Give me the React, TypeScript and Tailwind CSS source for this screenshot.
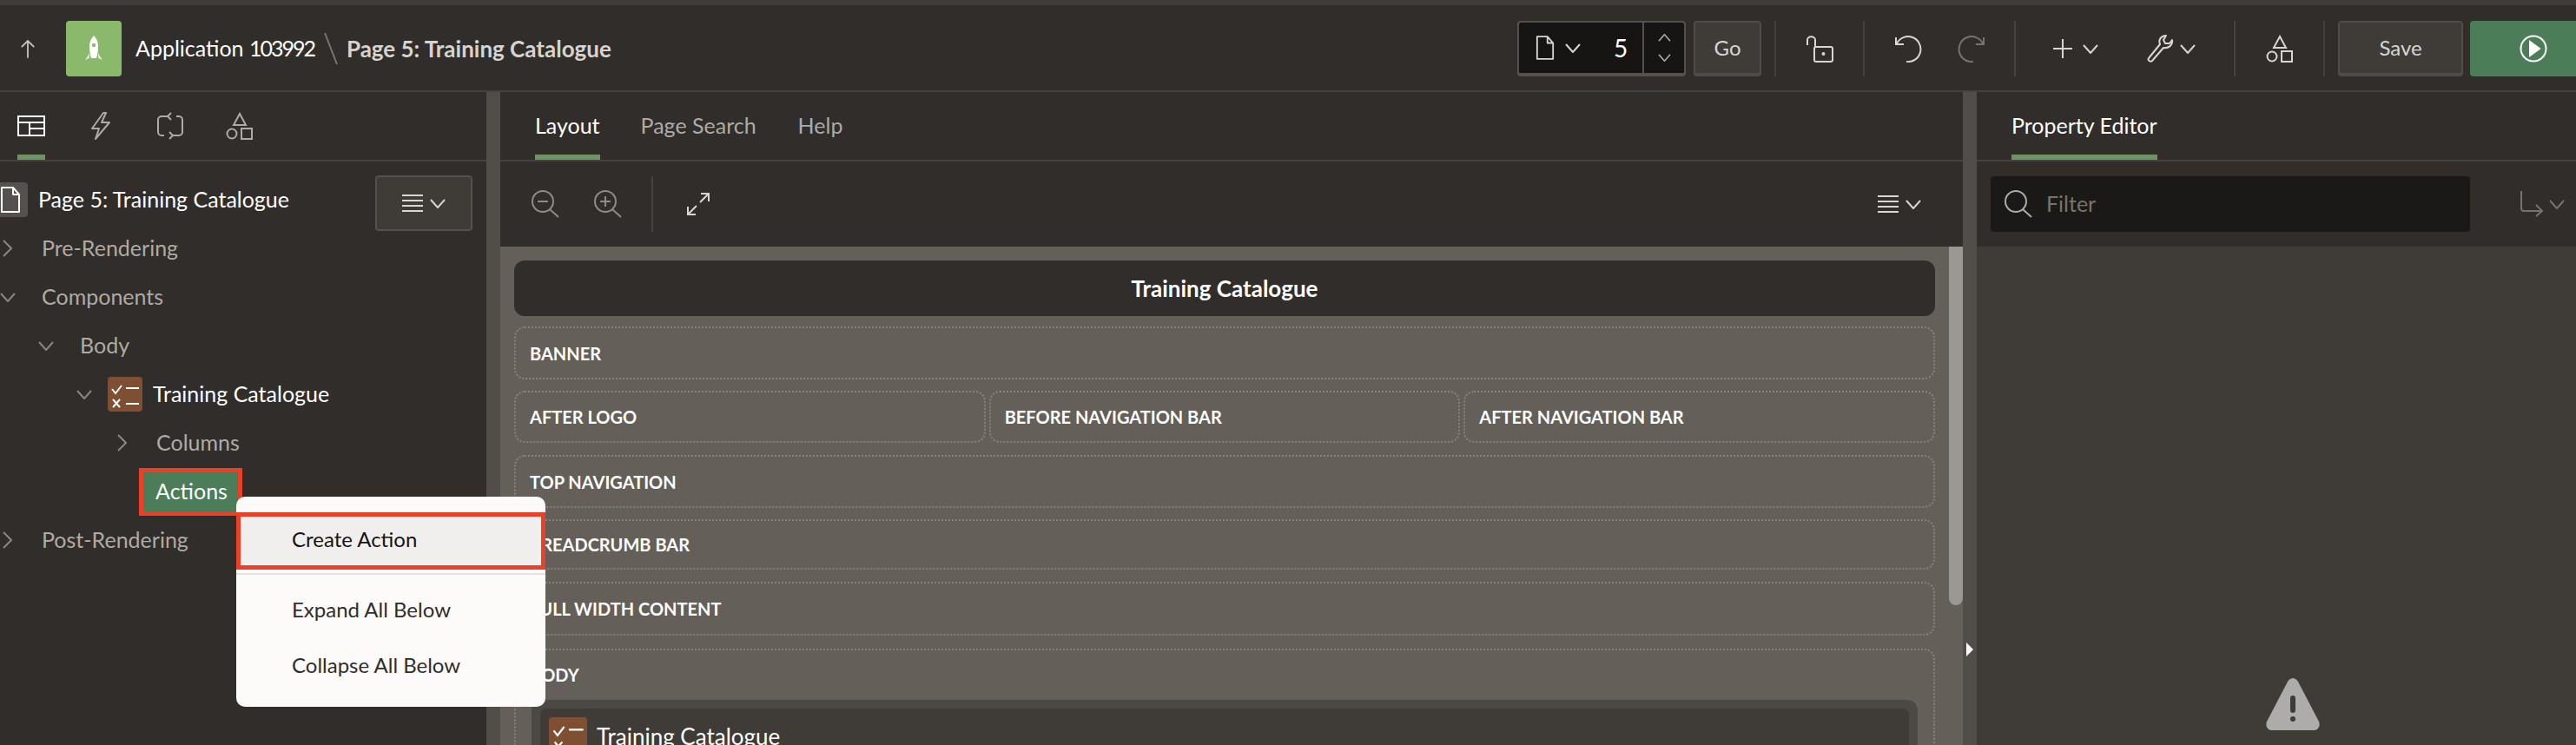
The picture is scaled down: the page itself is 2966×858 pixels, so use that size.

const stroke = { fill: "none", stroke: "currentColor", strokeWidth: 2 };

function Chev({ dir = "down", className = "" }: { dir?: "down" | "up" | "right"; className?: string }) {
  const d = dir === "down" ? "M1 1l8 9 8-9" : dir === "up" ? "M1 10l8-9 8 9" : "M1 1l9 9-9 9";
  const vb = dir === "right" ? "0 0 11 20" : "0 0 18 11";
  return (
    <svg viewBox={vb} className={className} {...stroke}>
      <path d={d} />
    </svg>
  );
}

function PageIcon({ className = "" }: { className?: string }) {
  return (
    <svg viewBox="0 0 24 32" className={className} {...stroke}>
      <path d="M2 2h13l7 8v20H2zM15 2v8h7" strokeLinejoin="round" />
    </svg>
  );
}

function Shapes({ className = "" }: { className?: string }) {
  return (
    <svg viewBox="0 0 32 32" className={className} {...stroke}>
      <path d="M16 2l7 13H9z" />
      <circle cx="7" cy="25" r="5.5" />
      <rect x="18" y="19" width="12" height="12" />
    </svg>
  );
}

function ListTile({ className = "" }: { className?: string }) {
  return (
    <div className={`flex items-center justify-center rounded-[4px] bg-[#7f4f33] ${className}`}>
      <svg viewBox="0 0 40 40" className="w-full h-full" fill="none" stroke="white" strokeWidth="2">
        <path d="M5 14l4 5 7-9M21 13h15M6 26l8 9M14 26l-8 9M21 31h15" />
      </svg>
    </div>
  );
}

function MenuGlyph({ className = "" }: { className?: string }) {
  return (
    <div className={`flex items-center gap-[8px] text-[#d8d6d3] ${className}`}>
      <svg viewBox="0 0 24 20" className="w-[24px] h-[20px]" {...stroke}>
        <path d="M0 1h24M0 7h24M0 13h24M0 19h24" />
      </svg>
      <Chev className="w-[18px] h-[11px]" />
    </div>
  );
}

function Sep({ className = "" }: { className?: string }) {
  return <div className={`w-[2px] h-[64px] shrink-0 bg-[#45413d] ${className}`} />;
}

function Region({ label, className = "" }: { label: string; className?: string }) {
  return (
    <div className={`flex items-center pl-[16px] rounded-[12px] border-2 border-dotted border-[#86827c] text-[20px] font-bold text-white ${className}`}>
      {label}
    </div>
  );
}

function TreeRow({ label, indent, open }: { label: string; indent: number; open?: boolean }) {
  return (
    <div className="h-[56px] flex items-center text-[#aeaba6]" style={{ paddingLeft: indent }}>
      <span className="w-[48px] shrink-0 flex items-center">
        {open ? <Chev className="w-[18px] h-[11px] text-[#8a8681]" /> : <Chev dir="right" className="w-[11px] h-[20px] ml-[3px] text-[#8a8681]" />}
      </span>
      <span>{label}</span>
    </div>
  );
}

function Tab({ label, active, className = "" }: { label: string; active?: boolean; className?: string }) {
  return (
    <div className={`h-[78px] flex flex-col ${className}`}>
      <div className={`flex-1 flex items-center text-[25px] pt-[6px] ${active ? "text-white" : "text-[#aeaba6]"}`}>{label}</div>
      <div className={`h-[6px] ${active ? "bg-[#6f9464]" : ""}`} />
    </div>
  );
}

export default function App() {
  return (
    <div className="relative w-[2966px] h-[858px] overflow-hidden flex flex-col bg-[#312d2a] text-[25px] text-white font-['Lato','Noto_Sans',sans-serif]">
      <div className="h-[6px] shrink-0 bg-[#403d38]" />

      {/* header */}
      <div className="h-[100px] shrink-0 flex items-start pt-[18px] border-b-2 border-[#45413d]">
        <svg viewBox="0 0 20 24" className="w-[18px] h-[22px] ml-[23px] mt-[21px] text-[#c9c6c2]" {...stroke}>
          <path d="M10 24V2M2 10l8-8 8 8" />
        </svg>
        <div className="w-[64px] h-[64px] ml-[35px] rounded-[4px] bg-[#8bb96c] flex items-center justify-center">
          <svg viewBox="0 0 24 32" className="w-[24px] h-[32px]">
            <path d="M2 29l5-8v6zM22 29l-5-8v6z" fill="#d9e8cc" />
            <path d="M12 1c4 4 5 9 5 13 0 5-1 9-2 13H9c-1-4-2-8-2-13 0-4 1-9 5-13z" fill="#fff" />
            <circle cx="12" cy="12" r="2.2" fill="#8bb96c" />
          </svg>
        </div>
        <div className="ml-[16px] h-[64px] flex items-center whitespace-pre">
          Application <span className="tracking-[-2px]">103992</span>
        </div>
        <svg viewBox="0 0 16 36" className="w-[16px] h-[36px] ml-[11px] mt-[14px] text-[#77736e]" {...stroke}>
          <path d="M1 0l14 36" />
        </svg>
        <div className="ml-[10px] h-[64px] flex items-center font-bold text-[26px] text-[#d6d4d0]">Page 5: Training Catalogue</div>

        <div className="ml-auto flex items-start text-[#d8d6d3]">
          <div className="w-[194px] h-[64px] flex rounded-[4px] bg-[#161513] border-2 border-b-4 border-[#55514d]">
            <div className="flex-1 flex items-center pl-[19px]">
              <PageIcon className="w-[22px] h-[32px]" />
              <Chev className="w-[18px] h-[11px] ml-[12px]" />
              <span className="ml-[38px] text-white text-[28px]">5</span>
            </div>
            <div className="w-[48px] border-l-2 border-[#55514d] flex flex-col items-center justify-between py-[13px] text-[#aeaba6]">
              <Chev dir="up" className="w-[15px] h-[9px]" />
              <Chev className="w-[15px] h-[9px]" />
            </div>
          </div>
          <div className="ml-[9px] w-[78px] h-[64px] rounded-[4px] bg-[#3f3c38] border-2 border-b-4 border-[#4f4b47] flex items-center justify-center text-[24px]">Go</div>
          <Sep className="ml-[15px]" />
          <svg viewBox="0 0 32 32" className="w-[32px] h-[32px] ml-[34px] mt-[16px]" {...stroke}>
            <path d="M2 12V6c0-5 9-5 9 0v8" />
            <rect x="10" y="14" width="21" height="17" rx="2" />
            <circle cx="20.5" cy="22" r="1" fill="currentColor" />
          </svg>
          <Sep className="ml-[34px]" />
          <svg viewBox="0 0 32 32" className="w-[32px] h-[32px] ml-[35px] mt-[16px]" {...stroke}>
            <path d="M1 3v8h9M2 10A14.5 14.5 0 1 1 13 31" />
          </svg>
          <svg viewBox="0 0 32 32" className="w-[32px] h-[32px] ml-[39px] mt-[16px] text-[#77736e]" {...stroke}>
            <path d="M31 3v8h-9M30 10A14.5 14.5 0 1 0 19 31" />
          </svg>
          <Sep className="ml-[34px]" />
          <svg viewBox="0 0 22 22" className="w-[22px] h-[22px] ml-[43px] mt-[21px]" {...stroke}>
            <path d="M11 0v22M0 11h22" />
          </svg>
          <Chev className="w-[18px] h-[11px] ml-[12px] mt-[27px]" />
          <svg viewBox="0 0 32 32" className="w-[32px] h-[32px] ml-[55px] mt-[16px]" {...stroke}>
            <path d="M3 27L16 11c-2-5 1-10 7-10l-3 5 2 4 5 0 3-4c1 6-4 10-10 9L7 30c-2 2-6-1-4-3z" strokeLinejoin="round" />
          </svg>
          <Chev className="w-[18px] h-[11px] ml-[7px] mt-[27px]" />
          <Sep className="ml-[44px]" />
          <Shapes className="w-[32px] h-[32px] ml-[35px] mt-[16px]" />
          <Sep className="ml-[34px]" />
          <div className="ml-[15px] w-[144px] h-[64px] rounded-[4px] bg-[#3f3c38] border-2 border-b-4 border-[#4f4b47] flex items-center justify-center text-[24px]">Save</div>
          <div className="ml-[8px] w-[122px] h-[64px] rounded-l-[4px] bg-[#4a7d58] flex items-center pl-[57px]">
            <svg viewBox="0 0 32 32" className="w-[32px] h-[32px] text-white" {...stroke}>
              <circle cx="16" cy="16" r="14.5" />
              <path d="M12 8l11 8-11 8z" fill="currentColor" />
            </svg>
          </div>
        </div>
      </div>

      <div className="flex-1 min-h-0 flex">
        {/* left tree */}
        <div className="w-[560px] shrink-0 flex flex-col">
          <div className="h-[80px] shrink-0 flex items-start pl-[20px] border-b-2 border-[#45413d]">
            <div className="flex flex-col w-[32px] h-[78px]">
              <div className="flex-1 flex items-center pt-[6px]">
                <svg viewBox="0 0 32 24" className="w-[32px] h-[24px]" {...stroke}>
                  <rect x="1" y="1" width="30" height="22" />
                  <path d="M1 8h30M14 8v15M14 15h17" />
                </svg>
              </div>
              <div className="h-[6px] bg-[#6f9464]" />
            </div>
            <div className="flex items-center h-[78px] text-[#aeaba6]">
              <svg viewBox="0 0 24 32" className="w-[24px] h-[32px] ml-[52px]" {...stroke}>
                <path d="M15 1L2 19h8l-4 12 16-19h-9l5-11z" strokeLinejoin="round" />
              </svg>
              <svg viewBox="0 0 32 32" className="w-[32px] h-[32px] ml-[52px]" {...stroke}>
                <path d="M13 5H6a4 4 0 0 0-4 4v14a4 4 0 0 0 4 4h3M19 27h7a4 4 0 0 0 4-4V9a4 4 0 0 0-4-4h-3M17 1l-4 4 4 4M15 23l4 4-4 4" />
              </svg>
              <Shapes className="w-[32px] h-[32px] ml-[48px]" />
            </div>
          </div>

          <div className="h-[72px] shrink-0 flex items-start">
            <div className="w-[32px] h-[40px] mt-[24px] rounded-r-[4px] bg-[#55514d] flex items-center text-white">
              <PageIcon className="w-[24px] h-[32px]" />
            </div>
            <span className="ml-[12px] mt-[24px] h-[40px] flex items-center">Page 5: Training Catalogue</span>
            <div className="ml-auto mr-[16px] mt-[16px] w-[112px] h-[64px] rounded-[4px] bg-[#3f3c38] border-2 border-[#55514d] flex items-center justify-center">
              <MenuGlyph />
            </div>
          </div>

          <TreeRow label="Pre-Rendering" indent={0} />
          <TreeRow label="Components" indent={0} open />
          <TreeRow label="Body" indent={44} open />
          <div className="h-[56px] flex items-center pl-[88px]">
            <Chev className="w-[18px] h-[11px] text-[#8a8681]" />
            <ListTile className="w-[40px] h-[40px] ml-[18px]" />
            <span className="ml-[12px]">Training Catalogue</span>
          </div>
          <TreeRow label="Columns" indent={132} />
          <div className="h-[56px] flex items-center pl-[160px]">
            <div className="w-[119px] h-[55px] border-[5px] border-[#ec3f25] flex items-center">
              <div className="w-full h-full bg-[#4a7d58] flex items-center justify-center pl-[2px] text-white">Actions</div>
            </div>
          </div>
          <TreeRow label="Post-Rendering" indent={0} />
        </div>

        <div className="w-[16px] shrink-0 bg-[#514d49]" />

        {/* layout */}
        <div className="flex-1 min-w-0 flex flex-col">
          <div className="h-[80px] shrink-0 flex pl-[40px] border-b-2 border-[#45413d]">
            <Tab label="Layout" active />
            <Tab label="Page Search" className="ml-[47px]" />
            <Tab label="Help" className="ml-[48px]" />
          </div>
          <div className="h-[98px] shrink-0 flex items-center pl-[36px] pr-[48px] text-[#8f8b86]">
            <svg viewBox="0 0 32 32" className="w-[32px] h-[32px]" {...stroke}>
              <circle cx="13" cy="13" r="12" />
              <path d="M21 22l10 9M7 13h12" />
            </svg>
            <svg viewBox="0 0 32 32" className="w-[32px] h-[32px] ml-[40px]" {...stroke}>
              <circle cx="13" cy="13" r="12" />
              <path d="M21 22l10 9M7 13h12M13 7v12" />
            </svg>
            <Sep className="ml-[34px]" />
            <svg viewBox="0 0 28 28" className="w-[28px] h-[28px] ml-[38px] text-[#d8d6d3]" {...stroke}>
              <path d="M16 12L26 2M17 2h9v9M12 16L2 26M2 17v9h9" />
            </svg>
            <MenuGlyph className="ml-auto" />
          </div>

          <div className="flex-1 min-h-0 flex bg-[#645f59] overflow-hidden">
            <div className="flex-1 min-w-0 flex flex-col pl-[16px] pr-[16px] pt-[16px]">
              <div className="h-[64px] shrink-0 rounded-[12px] bg-[#312d2a] flex items-center justify-center font-bold text-[26px]">Training Catalogue</div>
              <Region label="BANNER" className="h-[61px] mt-[12px] shrink-0" />
              <div className="h-[60px] mt-[13px] shrink-0 flex gap-[4px]">
                <Region label="AFTER LOGO" className="flex-1" />
                <Region label="BEFORE NAVIGATION BAR" className="flex-1" />
                <Region label="AFTER NAVIGATION BAR" className="flex-1" />
              </div>
              <Region label="TOP NAVIGATION" className="h-[61px] mt-[14px] shrink-0" />
              <Region label="BREADCRUMB BAR" className="h-[58px] mt-[13px] shrink-0" />
              <Region label="FULL WIDTH CONTENT" className="h-[62px] mt-[14px] shrink-0" />
              <div className="mt-[15px] shrink-0 h-[300px] rounded-[12px] border-2 border-dotted border-[#86827c]">
                <div className="h-[57px] flex items-center pl-[16px] pb-[2px] text-[20px] font-bold">BODY</div>
                <div className="ml-[18px] mr-[18px] h-[200px] rounded-t-[12px] bg-[#4c4844] p-[10px]">
                  <div className="h-[180px] rounded-t-[8px] bg-[#3f3c37] flex items-start p-[10px]">
                    <ListTile className="w-[44px] h-[44px]" />
                    <span className="ml-[11px] h-[44px] flex items-center text-[26px]">Training Catalogue</span>
                  </div>
                </div>
              </div>
            </div>
            <div className="w-[16px] shrink-0 h-[413px] rounded-b-[8px] bg-[#9b9792]" />
          </div>
        </div>

        <div className="relative w-[16px] shrink-0 bg-[#514d49]">
          <div className="absolute left-[4px] top-[634px] w-0 h-0 border-y-[8px] border-y-transparent border-l-[8px] border-l-white" />
        </div>

        {/* property editor */}
        <div className="w-[690px] shrink-0 flex flex-col">
          <div className="h-[80px] shrink-0 flex pl-[40px] border-b-2 border-[#45413d]">
            <Tab label="Property Editor" active />
          </div>
          <div className="h-[98px] shrink-0 flex items-center pl-[16px] text-[#8f8b86]">
            <div className="w-[552px] h-[64px] rounded-[4px] bg-[#1a1917] flex items-center pl-[16px]">
              <svg viewBox="0 0 32 32" className="w-[32px] h-[32px] text-[#aeaba6]" {...stroke}>
                <circle cx="13" cy="13" r="12" />
                <path d="M21 22l10 9" />
              </svg>
              <span className="ml-[16px] text-[#77736e]">Filter</span>
            </div>
            <svg viewBox="0 0 28 30" className="w-[28px] h-[30px] ml-[57px] text-[#77736e]" {...stroke}>
              <path d="M2 0v20c0 2 1 3 3 3h20M19 16l7 7-7 6" />
            </svg>
            <Chev className="w-[18px] h-[11px] ml-[6px] text-[#77736e]" />
          </div>
          <div className="flex-1 min-h-0 bg-[#3f3c37] flex justify-center pt-[497px] pl-[38px]">
            <svg viewBox="0 0 64 60" className="w-[64px] h-[60px] shrink-0">
              <path d="M25 6c3-8 11-8 14 0l23 44c2 5-1 10-6 10H8c-5 0-8-5-6-10z" fill="#adacaa" />
              <rect x="29" y="20" width="6" height="20" rx="3" fill="#3f3c37" />
              <circle cx="32" cy="47" r="3" fill="#3f3c37" />
            </svg>
          </div>
        </div>
      </div>

      {/* context menu */}
      <div className="absolute left-[272px] top-[572px] w-[356px] h-[242px] rounded-[10px] bg-[#fcfbfa] pt-[18px] text-[#312d2a] text-[24px]">
        <div className="h-[66px] border-[5px] border-[#ec3f25] bg-[#f1efed] text-[#161513] flex items-center pl-[59px] pb-[4px]">Create Action</div>
        <div className="h-[2px] mt-[4px] bg-[#e4e2df]" />
        <div className="h-[64px] mt-[8px] flex items-center pl-[64px]">Expand All Below</div>
        <div className="h-[64px] flex items-center pl-[64px]">Collapse All Below</div>
      </div>
    </div>
  );
}
